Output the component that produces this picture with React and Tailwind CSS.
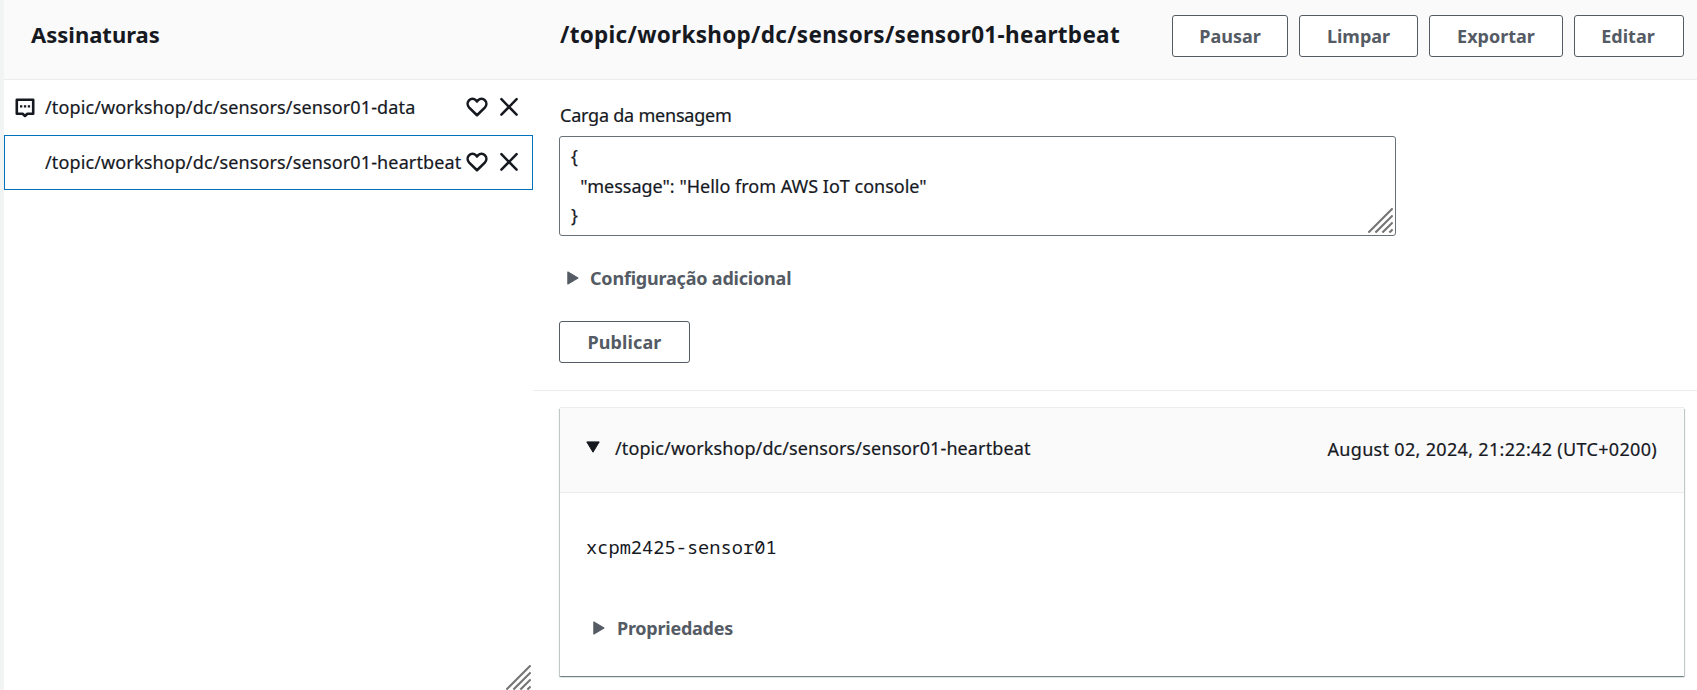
const messageBody = `{
  "message": "Hello from AWS IoT console"
}`;

const iconStroke = {
  fill: "none",
  stroke: "currentColor",
  strokeLinejoin: "round",
  strokeLinecap: "round",
};

function ChatIcon() {
  return (
    <svg width="20" height="20" viewBox="0 0 20 20" className="block shrink-0">
      <path d="M1.8 1.8H18.2V15.7H12.4L10 18L7.6 15.7H1.8Z" fill="none" stroke="currentColor" strokeWidth="2.6" strokeLinejoin="round" />
      <path d="M5 7.2h2.3v2.3H5zM8.9 7.2h2.3v2.3H8.9zM12.8 7.2H15.1v2.3h-2.3z" fill="currentColor" />
    </svg>
  );
}

function HeartIcon() {
  return (
    <svg width="22" height="20" viewBox="0 0 22 20" className="block shrink-0" {...iconStroke} strokeWidth="2.6">
      <path d="M11 18.2L3.2 10.6C1.2 8.5 1.2 5.2 3 3.3C4.9 1.4 8 1.4 9.8 3.1L11 4.5L12.2 3.1C14 1.4 17.1 1.4 19 3.3C20.8 5.2 20.8 8.5 18.8 10.6Z" />
    </svg>
  );
}

function CloseIcon() {
  return (
    <svg width="20" height="20" viewBox="0 0 20 20" className="block shrink-0" {...iconStroke} strokeWidth="2.5">
      <path d="M2.4 2.2L17.6 17.6M17.6 2.2L2.4 17.6" />
    </svg>
  );
}

function Caret({ open = false }) {
  return open ? (
    <svg width="14" height="12" viewBox="0 0 14 12" className="block shrink-0" fill="currentColor" stroke="currentColor" strokeWidth="1" strokeLinejoin="round">
      <path d="M0.8 0.9H13.2L7 11.2Z" />
    </svg>
  ) : (
    <svg width="12" height="14" viewBox="0 0 12 14" className="block shrink-0" fill="currentColor" stroke="currentColor" strokeWidth="1" strokeLinejoin="round">
      <path d="M0.8 0.8V13.2L11.2 7Z" />
    </svg>
  );
}

function ResizeGrip() {
  return (
    <svg width="25" height="25" viewBox="0 0 25 25" className="block" stroke="#757575" strokeWidth="2.1">
      <path d="M0.4 24.6L24.6 0.4M7.4 24.6L24.6 7.4M14.4 24.6L24.6 14.4M21.4 24.6L24.6 21.4" />
    </svg>
  );
}

function Button({ className, children }) {
  return (
    <button className={`h-[42px] shrink-0 rounded-[3px] border border-[#545b64] bg-white text-center text-[18px] font-bold text-[#545b64] ${className}`}>
      {children}
    </button>
  );
}

function Subscription({ topic, unread, selected }) {
  return (
    <li className={`flex h-[55px] items-center border pr-[13px] pl-[10px] ${selected ? "border-[#0073bb]" : "border-transparent"}`}>
      <span className="w-[30px] shrink-0">{unread && <ChatIcon />}</span>
      <span className="flex-1 text-[18px] tracking-[0.13px] whitespace-nowrap [-webkit-text-stroke:0.2px]">{topic}</span>
      <span className="flex shrink-0 items-center gap-[11px] pb-px">
        <HeartIcon />
        <CloseIcon />
      </span>
    </li>
  );
}

export default function App() {
  return (
    <div className="flex h-[690px] w-[1697px] overflow-hidden border-l-4 border-[#f2f3f3] bg-white font-['Noto_Sans','Open_Sans',sans-serif] text-[#16191f]">
      <aside className="flex w-[529px] shrink-0 flex-col">
        <header className="h-20 border-b border-[#eaeded] bg-[#fafafa] pl-[27px]">
          <h2 className="text-[22px] leading-[68px] font-bold">Assinaturas</h2>
        </header>
        <ul className="flex-1">
          <Subscription topic="/topic/workshop/dc/sensors/sensor01-data" unread />
          <Subscription topic="/topic/workshop/dc/sensors/sensor01-heartbeat" selected />
        </ul>
        <div className="flex justify-end pr-[2px]">
          <ResizeGrip />
        </div>
      </aside>

      <main className="min-w-0 flex-1">
        <header className="flex h-20 items-start justify-between border-b border-[#eaeded] bg-[#fafafa] pr-[13px] pl-[27px]">
          <h2 className="text-[22.5px] leading-[70px] font-bold tracking-[0.3px] whitespace-nowrap">
            /topic/workshop/dc/sensors/sensor01-heartbeat
          </h2>
          <div className="flex gap-[11px] pt-[15px]">
            <Button className="w-[116px]">Pausar</Button>
            <Button className="w-[119px]">Limpar</Button>
            <Button className="w-[134px]">Exportar</Button>
            <Button className="w-[110px] pr-[2px]">Editar</Button>
          </div>
        </header>

        <section className="border-b border-[#eaeded] pt-[22px] pb-[27px] pl-[26px]">
          <div className="pl-px text-[18px] leading-[26px] tracking-[-0.22px] [-webkit-text-stroke:0.2px]">Carga da mensagem</div>
          <div className="relative mt-2 h-[100px] w-[837px] rounded-[3px] border border-[#687078] px-[11px] pt-[5px]">
            <pre className="font-['Noto_Sans','Open_Sans',sans-serif] text-[18px] leading-[29.5px] [-webkit-text-stroke:0.2px]">{messageBody}</pre>
            <div className="absolute right-[2px] bottom-[2px]">
              <ResizeGrip />
            </div>
          </div>
          <div className="mt-7 flex h-7 items-center gap-[11px] pl-[8px] text-[#545b64]">
            <Caret />
            <span className="text-[18px] font-bold tracking-[-0.2px]">Configuração adicional</span>
          </div>
          <Button className="mt-[29px] block w-[131px] tracking-[0.1px]">Publicar</Button>
        </section>

        <article className="mt-[17px] mr-[13px] ml-[27px] h-[268px] shadow-[0_1px_1px_0_rgba(0,28,36,0.3),1px_1px_1px_0_rgba(0,28,36,0.2),-1px_1px_1px_0_rgba(0,28,36,0.2),0_-1px_0_0_#eaeded]">
          <header className="flex h-[85px] items-center border-b border-[#eaeded] bg-[#fafafa] pr-[27px] pl-[26px]">
            <span className="-mt-[6px]">
              <Caret open />
            </span>
            <span className="-mt-[3px] ml-[15px] flex-1 text-[18px] tracking-[0.11px] [-webkit-text-stroke:0.2px]">/topic/workshop/dc/sensors/sensor01-heartbeat</span>
            <time className="-mt-[2px] text-[18px] tracking-[0.32px] [-webkit-text-stroke:0.2px]">August 02, 2024, 21:22:42 (UTC+0200)</time>
          </header>
          <div className="pt-[40px] pl-[26px]">
            <pre className="font-['Noto_Sans_Mono','DejaVu_Sans_Mono',monospace] text-[18.7px] leading-7">xcpm2425-sensor01</pre>
            <div className="mt-[53px] flex h-7 items-center gap-[12px] pl-[7px] text-[#545b64]">
              <Caret />
              <span className="text-[18px] font-bold tracking-[-0.25px]">Propriedades</span>
            </div>
          </div>
        </article>
      </main>
    </div>
  );
}
